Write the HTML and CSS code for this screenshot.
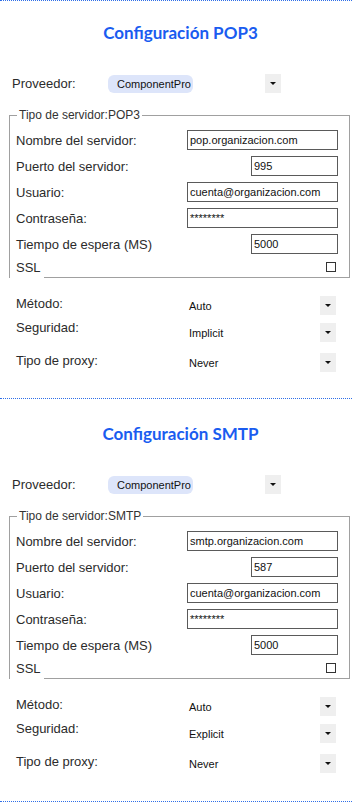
FILE: index.html
```html
<!DOCTYPE html>
<html lang="es">
<head>
    <meta charset="UTF-8">
    <meta name="viewport" content="width=device-width, initial-scale=1.0">
    <title>Configuración de correo</title>
    <link rel="stylesheet" href="styles.css">
</head>
<body>

<div class="page">
    <div class="top-rule"></div>

    <section class="config">
        <h2 class="config-title">Configuración POP3</h2>
        <div class="provider-row">
            <span class="provider-label">Proveedor:</span>
            <span class="pill">ComponentPro</span>
            <span class="drop-btn"></span>
        </div>
        <fieldset class="server-box">
            <legend>Tipo de servidor:POP3</legend>
            <div class="field-row">
                <span class="field-label">Nombre del servidor:</span>
                <span class="text-box wide">pop.organizacion.com</span>
            </div>
            <div class="field-row">
                <span class="field-label">Puerto del servidor:</span>
                <span class="text-box narrow">995</span>
            </div>
            <div class="field-row">
                <span class="field-label">Usuario:</span>
                <span class="text-box wide">cuenta@organizacion.com</span>
            </div>
            <div class="field-row">
                <span class="field-label">Contraseña:</span>
                <span class="text-box wide">********</span>
            </div>
            <div class="field-row">
                <span class="field-label">Tiempo de espera (MS)</span>
                <span class="text-box narrow">5000</span>
            </div>
            <div class="ssl-row">
                <span class="ssl-label">SSL</span>
                <span class="check"></span>
            </div>
        </fieldset>
        <div class="option-row">
            <span class="option-label">Método:</span>
            <span class="option-value">Auto</span>
            <span class="drop-btn"></span>
        </div>
        <div class="option-row">
            <span class="option-label raised">Seguridad:</span>
            <span class="option-value">Implicit</span>
            <span class="drop-btn"></span>
        </div>
        <div class="option-row proxy">
            <span class="option-label">Tipo de proxy:</span>
            <span class="option-value">Never</span>
            <span class="drop-btn"></span>
        </div>
    </section>

    <section class="config smtp">
        <h2 class="config-title">Configuración SMTP</h2>
        <div class="provider-row">
            <span class="provider-label">Proveedor:</span>
            <span class="pill">ComponentPro</span>
            <span class="drop-btn"></span>
        </div>
        <fieldset class="server-box">
            <legend>Tipo de servidor:SMTP</legend>
            <div class="field-row">
                <span class="field-label">Nombre del servidor:</span>
                <span class="text-box wide">smtp.organizacion.com</span>
            </div>
            <div class="field-row">
                <span class="field-label">Puerto del servidor:</span>
                <span class="text-box narrow">587</span>
            </div>
            <div class="field-row">
                <span class="field-label">Usuario:</span>
                <span class="text-box wide">cuenta@organizacion.com</span>
            </div>
            <div class="field-row">
                <span class="field-label">Contraseña:</span>
                <span class="text-box wide">********</span>
            </div>
            <div class="field-row">
                <span class="field-label">Tiempo de espera (MS)</span>
                <span class="text-box narrow">5000</span>
            </div>
            <div class="ssl-row">
                <span class="ssl-label">SSL</span>
                <span class="check"></span>
            </div>
        </fieldset>
        <div class="option-row">
            <span class="option-label">Método:</span>
            <span class="option-value">Auto</span>
            <span class="drop-btn"></span>
        </div>
        <div class="option-row">
            <span class="option-label raised">Seguridad:</span>
            <span class="option-value">Explicit</span>
            <span class="drop-btn"></span>
        </div>
        <div class="option-row proxy">
            <span class="option-label">Tipo de proxy:</span>
            <span class="option-value">Never</span>
            <span class="drop-btn"></span>
        </div>
    </section>
</div>

</body>
</html>
```

FILE: styles.css
```css
body {
    margin: 0;
    font-family: "Liberation Sans", Arial, sans-serif;
    color: #2b2b2b;
    background-color: #fff;
}
.page {
    width: 352px;
}
.top-rule {
    border-top: 1px dotted #2f6fe8;
}
.config {
    border-bottom: 1px dotted #2f6fe8;
    padding-bottom: 26px;
}
.config.smtp {
    padding-top: 3px;
    padding-bottom: 28px;
}
.config-title {
    margin: 0;
    padding: 22px 0 0 9px;
    text-align: center;
    font-family: Lato, sans-serif;
    font-weight: 700;
    font-size: 17px;
    line-height: 20px;
    color: #1a5cf0;
}
.provider-row {
    display: flex;
    align-items: center;
    height: 19px;
    margin-top: 31px;
    padding-left: 12px;
}
.provider-label {
    width: 96px;
    font-size: 13px;
}
.pill {
    box-sizing: border-box;
    width: 85px;
    height: 18px;
    padding-left: 9px;
    background-color: #dde5fa;
    border-radius: 6px;
    font-size: 11px;
    line-height: 18px;
    color: #111;
}
.provider-row .drop-btn {
    margin-left: 72px;
}
.drop-btn {
    width: 16px;
    height: 19px;
    background-color: #efefef;
    display: flex;
    align-items: center;
    justify-content: center;
}
.drop-btn::after {
    content: "";
    border-left: 3px solid transparent;
    border-right: 3px solid transparent;
    border-top: 3px solid #111;
}
.server-box {
    box-sizing: border-box;
    width: 341px;
    margin: 15px 0 0 9px;
    padding: 5px 11px 0 6px;
    border: 1px solid #a0a0a0;
}
.server-box legend {
    margin-left: 1px;
    padding: 0 2px;
    font-size: 12px;
    color: #333;
}
.field-row {
    display: flex;
    align-items: center;
    justify-content: space-between;
    height: 26px;
}
.field-label {
    font-size: 13px;
    line-height: 15px;
}
.text-box {
    box-sizing: border-box;
    height: 20px;
    padding-left: 2px;
    border: 1px solid #5a5a5a;
    font-size: 11px;
    line-height: 18px;
    color: #111;
}
.wide {
    width: 151px;
}
.narrow {
    width: 87px;
}
.ssl-row {
    display: flex;
    align-items: flex-start;
    justify-content: space-between;
    height: 23px;
    margin: 0 0 -3px -6px;
}
.ssl-label {
    align-self: stretch;
    padding: 3px 3px 0 6px;
    background-color: #fff;
    font-size: 13px;
    line-height: 15px;
}
.check {
    box-sizing: border-box;
    width: 10px;
    height: 10px;
    margin: 5px 2px 0 0;
    border: 1px solid #333;
}
.option-row {
    display: flex;
    align-items: center;
    height: 19px;
    margin-top: 18px;
    padding: 0 16px;
}
.option-row + .option-row {
    margin-top: 8px;
}
.option-row.proxy {
    margin-top: 11px;
}
.option-label {
    align-self: flex-start;
    width: 173px;
    font-size: 13px;
    line-height: 15px;
}
.option-label.raised {
    margin-top: -3px;
}
.option-value {
    flex: 1;
    font-size: 11px;
    color: #111;
}
```
